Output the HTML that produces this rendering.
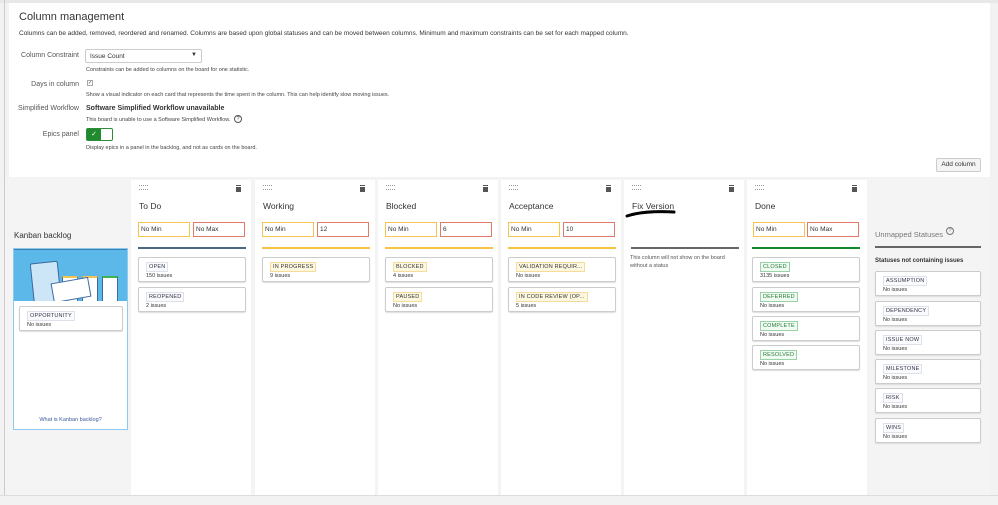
<!DOCTYPE html>
<html><head><style>
*{box-sizing:border-box;margin:0;padding:0}
body{width:998px;height:505px;background:#f2f2f2;font-family:"Liberation Sans",Arial,sans-serif;position:relative;overflow:hidden;color:#333}
.a{position:absolute}
.top{left:9px;top:3px;width:981px;height:174px;background:#fff}
.lbl{font-size:7px;color:#555;text-align:right;width:70px}
.help{font-size:5.5px;color:#444}
.board{left:5px;top:178px;width:985px;height:317px;background:#f4f4f4}
.col{top:180px;width:120px;height:315px;background:#fff}
.grip{left:8px;top:5px;width:9px;height:5px;border-top:1px dotted #999;border-bottom:1px dotted #999}
.trash{right:10px;top:6px;width:5px;height:6px;background:#555;border-top:1px solid #fff;box-shadow:0 -1px 0 #555}
.title{left:8px;top:21px;font-size:8.5px;color:#333}
.in{top:42px;width:52px;height:15px;border:1px solid #f3c453;font-size:6.5px;padding:3px 2px;color:#333}
.mx{border-color:#e07a6b}
.line{left:7px;top:67px;width:108px;height:2px}
.card{left:7px;width:108px;height:25px;border:1px solid #ccc;border-radius:2px;box-shadow:0 1px 1px #ddd;background:#fff}
.tag{position:absolute;left:7px;top:4px;font-size:5.5px;padding:1px 2px;border:1px solid #ddd;background:#f8f8f8;color:#333;letter-spacing:.2px}
.y{background:#fff8e0;border-color:#f6dc9b}
.g{background:#f0fbf2;border-color:#9ad1a7;color:#2a7a3a}
.b{border-color:#dfe1ea;background:#fafbff;color:#334}
.cnt{position:absolute;left:7px;top:15px;font-size:5.5px;color:#333}
</style></head><body>
<div class="a" style="left:0;top:0;width:998px;height:3px;background:#e8e8e8"></div>
<div class="a" style="left:4px;top:0;width:1px;height:495px;background:#ccc"></div>
<div class="a top"></div>
<div class="a" style="left:19px;top:11px;font-size:11px;color:#333">Column management</div>
<div class="a" style="left:19px;top:30px;font-size:6.5px;color:#333">Columns can be added, removed, reordered and renamed. Columns are based upon global statuses and can be moved between columns. Minimum and maximum constraints can be set for each mapped column.</div>
<div class="a lbl" style="left:9px;top:52px">Column Constraint</div>
<div class="a" style="left:85px;top:49px;width:117px;height:14px;border:1px solid #ccc;border-radius:2px;font-size:6.5px;padding:3px 4px;color:#333">Issue Count<span style="position:absolute;right:4px;top:2px;font-size:6px">▼</span></div>
<div class="a help" style="left:86px;top:67px">Constraints can be added to columns on the board for one statistic.</div>
<div class="a lbl" style="left:9px;top:81px">Days in column</div>
<div class="a" style="left:87px;top:80px;width:6px;height:6px;border:1px solid #aaa;font-size:5px;line-height:4px;text-align:center">✓</div>
<div class="a help" style="left:86px;top:92px">Show a visual indicator on each card that represents the time spent in the column. This can help identify slow moving issues.</div>
<div class="a lbl" style="left:9px;top:105px">Simplified Workflow</div>
<div class="a" style="left:86px;top:105px;font-size:7px;font-weight:bold;color:#333">Software Simplified Workflow unavailable</div>
<div class="a help" style="left:86px;top:117px">This board is unable to use a Software Simplified Workflow.</div>
<div class="a" style="left:234px;top:115px;width:8px;height:8px;border:1px solid #555;border-radius:50%;font-size:5.5px;text-align:center;line-height:6px">?</div>
<div class="a lbl" style="left:9px;top:131px">Epics panel</div>
<div class="a" style="left:86px;top:128px;width:27px;height:13px;border:1px solid #2e8b3d;border-radius:2px;background:#fff"><div style="width:14px;height:11px;background:#1f8a2e;color:#fff;font-size:7px;text-align:center;line-height:11px">✓</div></div>
<div class="a help" style="left:86px;top:145px">Display epics in a panel in the backlog, and not as cards on the board.</div>
<div class="a" style="left:936px;top:158px;width:45px;height:14px;border:1px solid #ccc;border-radius:2px;background:#f4f4f4;font-size:6.5px;text-align:center;line-height:12px;color:#333">Add column</div>

<div class="a board"></div>
<div class="a" style="left:14px;top:231px;font-size:8px;color:#333">Kanban backlog</div>
<div class="a" style="left:13px;top:248px;width:115px;height:182px;border:1px solid #8ccbef;background:#fff">
<div style="position:absolute;left:0;top:0;width:113px;height:52px;background:#5cb8e8;border-top:1px solid #3a7fb0;overflow:hidden">
<div style="position:absolute;left:18px;top:12px;width:28px;height:45px;background:#cde6f7;border:1px solid #3b6aa0;border-radius:2px;transform:rotate(-6deg)"></div>
<div style="position:absolute;left:48px;top:26px;width:16px;height:30px;background:#fff;border:1px solid #3b6aa0;border-top:2px solid #f3c453"></div>
<div style="position:absolute;left:68px;top:26px;width:16px;height:30px;background:#fff;border:1px solid #3b6aa0;border-top:2px solid #f3c453"></div>
<div style="position:absolute;left:88px;top:26px;width:16px;height:30px;background:#fff;border:1px solid #3b6aa0;border-top:2px solid #3fb34f"></div>
<div style="position:absolute;left:38px;top:30px;width:38px;height:20px;background:#fff;border:1px solid #3b6aa0;transform:rotate(-10deg)"></div>
</div>
<div class="card a" style="left:5px;top:57px;width:104px"><span class="tag b">OPPORTUNITY</span><span class="cnt">No issues</span></div>
<div style="position:absolute;left:0;top:168px;width:113px;text-align:center;font-size:5.5px;color:#3b5b9a">What is Kanban backlog?</div>
</div>

<div class="a col" style="left:131px"><div class="a grip"></div><div class="a trash"></div><div class="a title">To Do</div>
<div class="a in" style="left:7px">No Min</div><div class="a in mx" style="left:62px">No Max</div><div class="a line" style="background:#4a6785"></div>
<div class="a card" style="top:77px"><span class="tag b">OPEN</span><span class="cnt">150 issues</span></div>
<div class="a card" style="top:107px"><span class="tag b">REOPENED</span><span class="cnt">2 issues</span></div></div>

<div class="a col" style="left:255px"><div class="a grip"></div><div class="a trash"></div><div class="a title">Working</div>
<div class="a in" style="left:7px">No Min</div><div class="a in mx" style="left:62px">12</div><div class="a line" style="background:#f6c342"></div>
<div class="a card" style="top:77px"><span class="tag y">IN PROGRESS</span><span class="cnt">9 issues</span></div></div>

<div class="a col" style="left:378px"><div class="a grip"></div><div class="a trash"></div><div class="a title">Blocked</div>
<div class="a in" style="left:7px">No Min</div><div class="a in mx" style="left:62px">6</div><div class="a line" style="background:#f6c342"></div>
<div class="a card" style="top:77px"><span class="tag y">BLOCKED</span><span class="cnt">4 issues</span></div>
<div class="a card" style="top:107px"><span class="tag y">PAUSED</span><span class="cnt">No issues</span></div></div>

<div class="a col" style="left:501px"><div class="a grip"></div><div class="a trash"></div><div class="a title">Acceptance</div>
<div class="a in" style="left:7px">No Min</div><div class="a in mx" style="left:62px">10</div><div class="a line" style="background:#f6c342"></div>
<div class="a card" style="top:77px"><span class="tag y">VALIDATION REQUIR...</span><span class="cnt">No issues</span></div>
<div class="a card" style="top:107px"><span class="tag y">IN CODE REVIEW (OP...</span><span class="cnt">5 issues</span></div></div>

<div class="a col" style="left:624px"><div class="a grip"></div><div class="a trash"></div><div class="a title">Fix Version</div>
<svg class="a" style="left:0;top:27px" width="60" height="12"><path d="M3 9 C15 5,30 4,50 5" stroke="#000" stroke-width="3" fill="none" stroke-linecap="round"/></svg>
<div class="a line" style="background:#666"></div>
<div class="a" style="left:6px;top:74px;font-size:5.5px;color:#555;width:110px;line-height:8px">This column will not show on the board without a status</div></div>

<div class="a col" style="left:747px"><div class="a grip"></div><div class="a trash"></div><div class="a title">Done</div>
<div class="a in" style="left:6px">No Min</div><div class="a in mx" style="left:60px">No Max</div><div class="a line" style="left:5px;background:#14892c"></div>
<div class="a card" style="top:77px;left:5px"><span class="tag g">CLOSED</span><span class="cnt">3135 issues</span></div>
<div class="a card" style="top:107px;left:5px"><span class="tag g">DEFERRED</span><span class="cnt">No issues</span></div>
<div class="a card" style="top:136px;left:5px"><span class="tag g">COMPLETE</span><span class="cnt">No issues</span></div>
<div class="a card" style="top:165px;left:5px"><span class="tag g">RESOLVED</span><span class="cnt">No issues</span></div></div>

<div class="a" style="left:875px;top:230px;font-size:7.5px;color:#777">Unmapped Statuses</div>
<div class="a" style="left:946px;top:227px;width:8px;height:8px;border:1px solid #777;border-radius:50%;font-size:5.5px;text-align:center;line-height:6px;color:#777">?</div>
<div class="a" style="left:875px;top:246px;width:106px;height:2px;background:#666"></div>
<div class="a" style="left:875px;top:258px;font-size:6px;font-weight:bold;color:#333">Statuses not containing issues</div>
<div class="a card" style="left:875px;top:271px;width:106px"><span class="tag b">ASSUMPTION</span><span class="cnt">No issues</span></div>
<div class="a card" style="left:875px;top:301px;width:106px"><span class="tag b">DEPENDENCY</span><span class="cnt">No issues</span></div>
<div class="a card" style="left:875px;top:330px;width:106px"><span class="tag b">ISSUE NOW</span><span class="cnt">No issues</span></div>
<div class="a card" style="left:875px;top:359px;width:106px"><span class="tag b">MILESTONE</span><span class="cnt">No issues</span></div>
<div class="a card" style="left:875px;top:388px;width:106px"><span class="tag b">RISK</span><span class="cnt">No issues</span></div>
<div class="a card" style="left:875px;top:418px;width:106px"><span class="tag b">WINS</span><span class="cnt">No issues</span></div>
<div class="a" style="left:0;top:495px;width:998px;height:1px;background:#ddd"></div>
</body></html>
